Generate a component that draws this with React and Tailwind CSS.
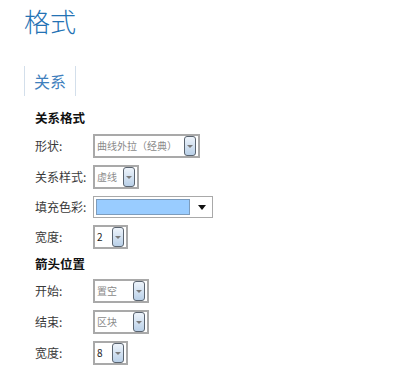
const font = { fontFamily: '"Noto Sans CJK SC", "Liberation Sans", sans-serif' };

function ArrowButton() {
  return (
    <div className="mx-[2px] flex h-[20px] w-[12px] shrink-0 items-center justify-center rounded-[3px] border border-[#5a6470] bg-gradient-to-b from-[#eef4fb] to-[#b9d0e8]">
      <span className="block h-0 w-0 border-x-[3px] border-t-[3px] border-x-transparent border-t-[#7a7a7a]" />
    </div>
  );
}

function FakeSelect({ width, value, dark }) {
  return (
    <div
      className="flex h-[24px] items-center border-2 border-[#a9a9a9] bg-white"
      style={{ width }}
    >
      <span
        className={`flex-1 whitespace-nowrap pl-[2px] text-[10px] leading-[14px] ${dark ? 'text-[#222]' : 'text-[#8a8a8a]'}`}
      >
        {value}
      </span>
      <ArrowButton />
    </div>
  );
}

function Row({ label, children }) {
  return (
    <div className="flex items-center">
      <span className="w-[58px] text-[12px] text-[#3a3a3a]">{label}</span>
      {children}
    </div>
  );
}

export default function App() {
  return (
    <div className="h-[370px] w-[400px] overflow-hidden bg-white" style={font}>
      <h1 className="pl-[24px] pt-[5px] text-[26px] font-light leading-[32px] text-[#2472b4]">格式</h1>

      <div className="ml-[24px] mt-[29px] inline-flex h-[30px] items-center border-x border-[#d3dfeb] px-[9px] text-[16px] text-[#3f80bd]">
        关系
      </div>

      <div className="pl-[35px]">
        <h2 className="mt-[14px] text-[12.5px] font-bold leading-[16px] text-[#111]">关系格式</h2>

        <div className="mt-[8px] flex flex-col gap-[7px]">
          <Row label="形状:">
            <FakeSelect width="107px" value="曲线外拉（经典）" />
          </Row>
          <Row label="关系样式:">
            <FakeSelect width="46px" value="虚线" />
          </Row>
          <Row label="填充色彩:">
            <div className="flex h-[22px] w-[120px] items-center border border-[#a9a9a9] bg-white">
              <div className="ml-[2px] h-[16px] w-[94px] border border-[#7d9cbc] bg-[#99ccff]" />
              <span className="ml-[8px] block h-0 w-0 border-x-[4px] border-t-[5px] border-x-transparent border-t-[#111]" />
            </div>
          </Row>
          <Row label="宽度:">
            <FakeSelect width="35px" value="2" dark />
          </Row>
        </div>

        <h2 className="mt-[7px] text-[12.5px] font-bold leading-[16px] text-[#111]">箭头位置</h2>

        <div className="mt-[7px] flex flex-col gap-[7px]">
          <Row label="开始:">
            <FakeSelect width="56px" value="置空" />
          </Row>
          <Row label="结束:">
            <FakeSelect width="56px" value="区块" />
          </Row>
          <Row label="宽度:">
            <FakeSelect width="35px" value="8" dark />
          </Row>
        </div>
      </div>
    </div>
  );
}
